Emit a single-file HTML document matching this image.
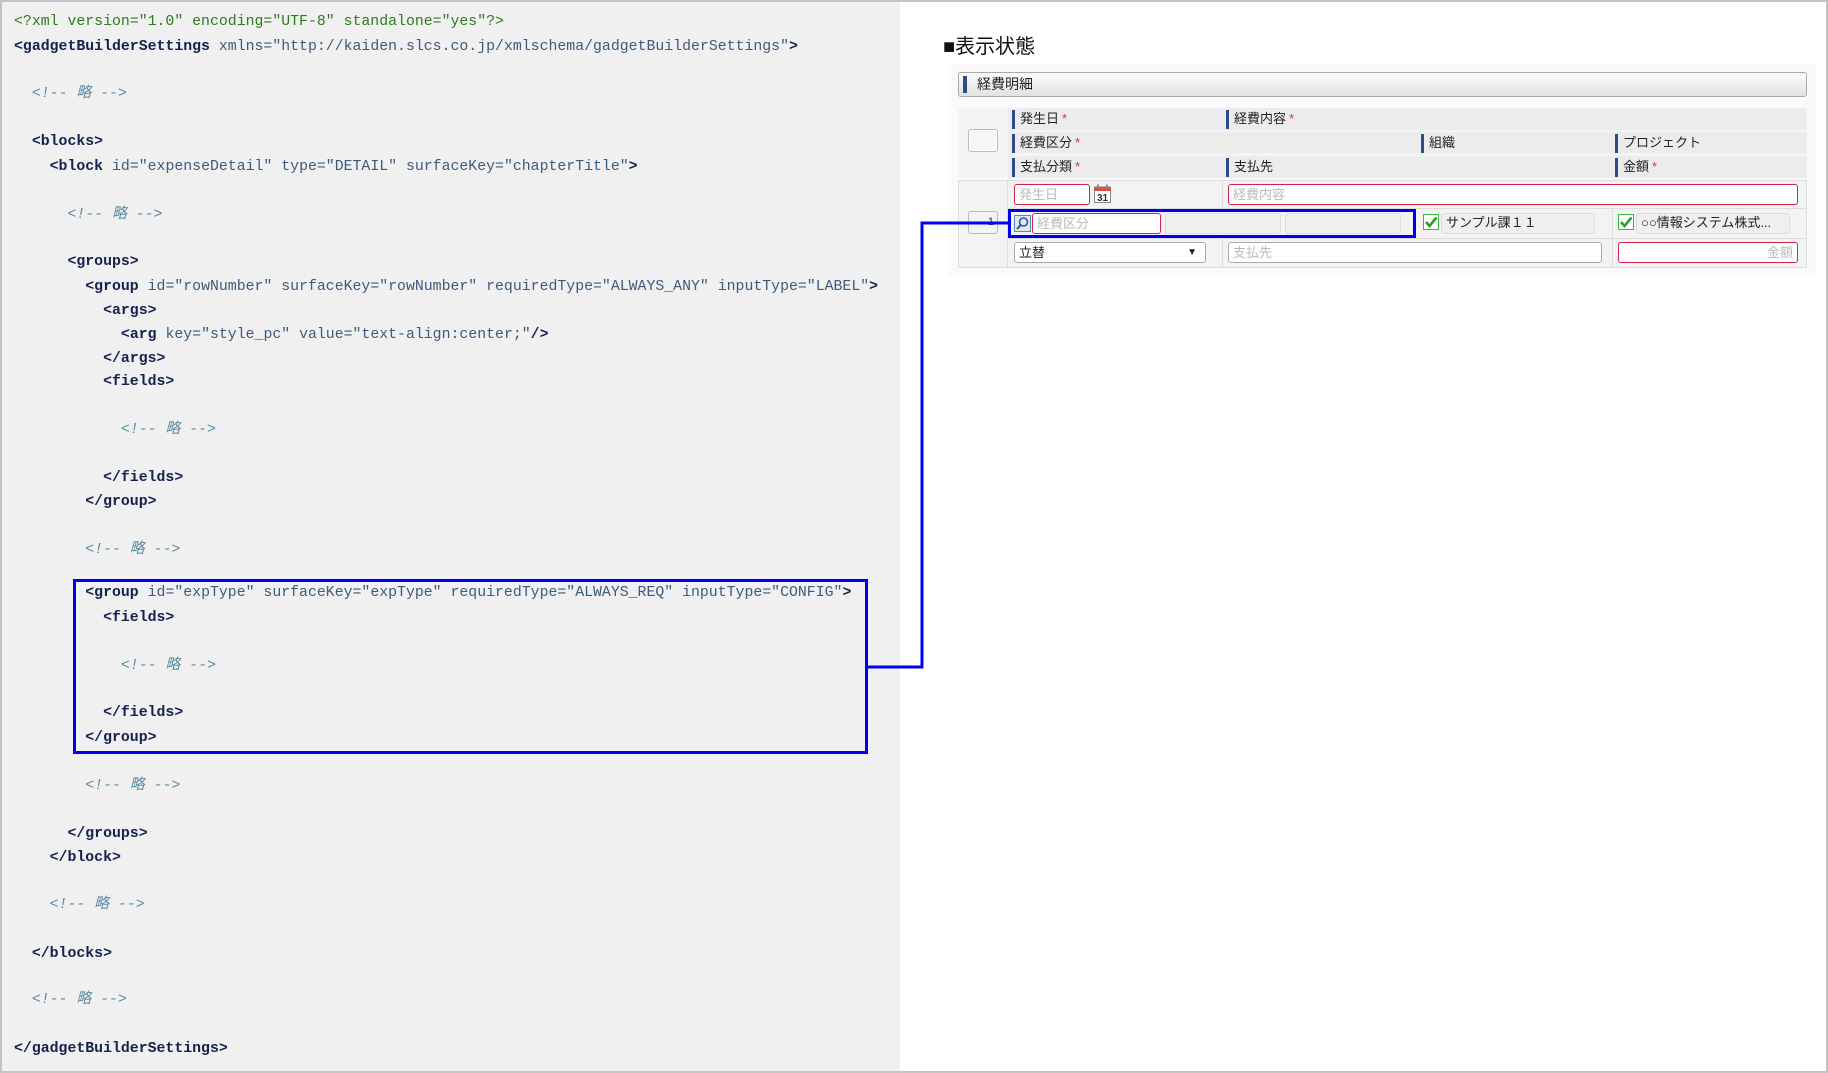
<!DOCTYPE html>
<html><head><meta charset="utf-8"><style>
html,body{margin:0;padding:0;}
body{width:1828px;height:1073px;position:relative;overflow:hidden;background:#fff;font-family:"Liberation Sans","Noto Sans CJK JP",sans-serif;}
#frame{position:absolute;left:0;top:0;width:1824px;height:1069px;border:2px solid #c4c4c4;}
#code{position:absolute;left:2px;top:2px;width:898px;height:1069px;background:#f0f0f0;}
.l{position:absolute;left:12px;height:24px;line-height:24px;font-family:"Liberation Mono","Noto Sans CJK JP",monospace;font-size:14.85px;white-space:pre;color:#3d5a7c;}
.t{color:#14224d;font-weight:bold;}
.c{color:#5a8aa2;font-style:italic;}
.g{color:#2f7a1e;}
.abs{position:absolute;box-sizing:border-box;}
.hdr{background:#ececec;}
.bar{position:absolute;width:3px;background:#2f4b8a;}
.ht{position:absolute;font-size:13px;color:#222;line-height:22px;}
.ht b{color:#e0303a;font-weight:normal;margin-left:3px;}
.inp{position:absolute;box-sizing:border-box;border:1px solid #d8204a;border-radius:3px;background:#fff;font-size:13px;color:#bbb;line-height:19px;padding-left:4px;}
.gbox{position:absolute;box-sizing:border-box;border:1px solid #ddd;border-radius:3px;background:#efefef;font-size:13px;color:#222;line-height:18px;padding-left:4px;}
.chk{position:absolute;box-sizing:border-box;width:16px;height:16px;border:1px solid #3cb83c;background:#fff;}
</style></head><body>
<div id="code">
<div class="l g" style="top:8px">&lt;?xml version="1.0" encoding="UTF-8" standalone="yes"?&gt;</div>
<div class="l" style="top:33px"><span class="t">&lt;gadgetBuilderSettings</span> xmlns="http://kaiden.slcs.co.jp/xmlschema/gadgetBuilderSettings"<span class="t">&gt;</span></div>
<div class="l c" style="top:80px">  &lt;!-- 略 --&gt;</div>
<div class="l t" style="top:128px">  &lt;blocks&gt;</div>
<div class="l" style="top:153px">    <span class="t">&lt;block</span> id="expenseDetail" type="DETAIL" surfaceKey="chapterTitle"<span class="t">&gt;</span></div>
<div class="l c" style="top:201px">      &lt;!-- 略 --&gt;</div>
<div class="l t" style="top:248px">      &lt;groups&gt;</div>
<div class="l" style="top:273px">        <span class="t">&lt;group</span> id="rowNumber" surfaceKey="rowNumber" requiredType="ALWAYS_ANY" inputType="LABEL"<span class="t">&gt;</span></div>
<div class="l t" style="top:297px">          &lt;args&gt;</div>
<div class="l" style="top:321px">            <span class="t">&lt;arg</span> key="style_pc" value="text-align:center;"<span class="t">/&gt;</span></div>
<div class="l t" style="top:345px">          &lt;/args&gt;</div>
<div class="l t" style="top:368px">          &lt;fields&gt;</div>
<div class="l c" style="top:416px">            &lt;!-- 略 --&gt;</div>
<div class="l t" style="top:464px">          &lt;/fields&gt;</div>
<div class="l t" style="top:488px">        &lt;/group&gt;</div>
<div class="l c" style="top:536px">        &lt;!-- 略 --&gt;</div>
<div class="l" style="top:579px">        <span class="t">&lt;group</span> id="expType" surfaceKey="expType" requiredType="ALWAYS_REQ" inputType="CONFIG"<span class="t">&gt;</span></div>
<div class="l t" style="top:604px">          &lt;fields&gt;</div>
<div class="l c" style="top:652px">            &lt;!-- 略 --&gt;</div>
<div class="l t" style="top:699px">          &lt;/fields&gt;</div>
<div class="l t" style="top:724px">        &lt;/group&gt;</div>
<div class="l c" style="top:772px">        &lt;!-- 略 --&gt;</div>
<div class="l t" style="top:820px">      &lt;/groups&gt;</div>
<div class="l t" style="top:844px">    &lt;/block&gt;</div>
<div class="l c" style="top:891px">    &lt;!-- 略 --&gt;</div>
<div class="l t" style="top:940px">  &lt;/blocks&gt;</div>
<div class="l c" style="top:986px">  &lt;!-- 略 --&gt;</div>
<div class="l t" style="top:1035px">&lt;/gadgetBuilderSettings&gt;</div>
</div>
<div id="frame"></div>

<div class="abs" style="left:943px;top:33px;font-size:20px;color:#111;line-height:28px;">■表示状態</div>
<div class="abs" style="left:948px;top:64px;width:868px;height:212px;background:#fafafc;"></div>
<div class="abs" style="left:958px;top:72px;width:849px;height:25px;border:1px solid #aaa;border-radius:3px;background:linear-gradient(#fbfbfb,#e2e2e2);"></div>
<div class="abs" style="left:963px;top:76px;width:4px;height:17px;background:#2f4b8a;"></div>
<div class="abs" style="left:977px;top:74px;font-size:14px;color:#222;line-height:21px;">経費明細</div>

<div class="abs hdr" style="left:958px;top:108px;width:849px;height:70px;background:#f4f4f4;"></div>
<div class="abs hdr" style="left:1008px;top:108px;width:799px;height:22px;"></div>
<div class="abs hdr" style="left:1008px;top:132px;width:799px;height:21px;"></div>
<div class="abs hdr" style="left:1008px;top:156px;width:799px;height:22px;"></div>
<div class="abs" style="left:968px;top:129px;width:30px;height:23px;border:1px solid #bbb;border-radius:3px;background:#f6f6f6;box-shadow:inset 0 0 0 1px #fff;"></div>
<div class="bar" style="left:1012px;top:110px;height:19px"></div>
<div class="bar" style="left:1226px;top:110px;height:19px"></div>
<div class="bar" style="left:1012px;top:134px;height:19px"></div>
<div class="bar" style="left:1421px;top:134px;height:19px"></div>
<div class="bar" style="left:1615px;top:134px;height:19px"></div>
<div class="bar" style="left:1012px;top:158px;height:19px"></div>
<div class="bar" style="left:1226px;top:158px;height:19px"></div>
<div class="bar" style="left:1615px;top:158px;height:19px"></div>
<div class="ht" style="left:1020px;top:108px">発生日<b>*</b></div>
<div class="ht" style="left:1234px;top:108px">経費内容<b>*</b></div>
<div class="ht" style="left:1020px;top:132px">経費区分<b>*</b></div>
<div class="ht" style="left:1429px;top:132px">組織</div>
<div class="ht" style="left:1623px;top:132px">プロジェクト</div>
<div class="ht" style="left:1020px;top:156px">支払分類<b>*</b></div>
<div class="ht" style="left:1234px;top:156px">支払先</div>
<div class="ht" style="left:1623px;top:156px">金額<b>*</b></div>

<div class="abs" style="left:958px;top:180px;width:849px;height:88px;background:#f3f3f3;border:1px solid #ddd;"></div>
<div class="abs" style="left:1007px;top:180px;width:1px;height:88px;background:#ddd;"></div>
<div class="abs" style="left:1008px;top:208px;width:799px;height:1px;background:#ddd;"></div>
<div class="abs" style="left:1008px;top:238px;width:799px;height:1px;background:#ddd;"></div>
<div class="abs" style="left:1222px;top:180px;width:1px;height:28px;background:#ddd;"></div>
<div class="abs" style="left:1222px;top:238px;width:1px;height:30px;background:#ddd;"></div>
<div class="abs" style="left:1612px;top:208px;width:1px;height:60px;background:#ddd;"></div>
<div class="abs" style="left:968px;top:211px;width:30px;height:23px;border:1px solid #bbb;border-radius:3px;background:#f3f3f3;font-size:11px;color:#333;text-align:right;padding-right:3px;line-height:20px;">1</div>

<div class="inp" style="left:1014px;top:184px;width:76px;height:21px;">発生日</div>
<svg class="abs" style="left:1094px;top:184px" width="17" height="19" viewBox="0 0 17 19"><rect x="0.5" y="3" width="16" height="15.5" fill="#fff" stroke="#888"/><rect x="0.5" y="3" width="16" height="4" fill="#e24a3a"/><rect x="3" y="0.5" width="2" height="4" fill="#888"/><rect x="12" y="0.5" width="2" height="4" fill="#888"/><text x="8.5" y="17" font-size="10" font-family="Liberation Sans" text-anchor="middle" fill="#333" font-weight="bold">31</text></svg>
<div class="inp" style="left:1228px;top:184px;width:570px;height:21px;">経費内容</div>

<svg class="abs" style="left:1014px;top:215px" width="17" height="17" viewBox="0 0 17 17"><rect x="0.5" y="0.5" width="16" height="16" fill="#dce8f5" stroke="#5a86b8"/><circle cx="9.5" cy="7" r="4" fill="none" stroke="#2d5a90" stroke-width="1.6"/><path d="M6.8 9.8 L3 14" stroke="#2d5a90" stroke-width="2"/></svg>
<div class="inp" style="left:1032px;top:213px;width:129px;height:21px;">経費区分</div>
<div class="gbox" style="left:1165px;top:213px;width:116px;height:21px;"></div>
<div class="gbox" style="left:1285px;top:213px;width:116px;height:21px;"></div>
<div class="chk" style="left:1423px;top:214px;"></div>
<svg class="abs" style="left:1424px;top:215px" width="14" height="14" viewBox="0 0 14 14"><path d="M2 7 L5.5 11 L12.5 2.5" stroke="#2aa02a" stroke-width="2.6" fill="none"/></svg>
<div class="gbox" style="left:1441px;top:213px;width:154px;height:21px;">サンプル課１１</div>
<div class="chk" style="left:1618px;top:214px;"></div>
<svg class="abs" style="left:1619px;top:215px" width="14" height="14" viewBox="0 0 14 14"><path d="M2 7 L5.5 11 L12.5 2.5" stroke="#2aa02a" stroke-width="2.6" fill="none"/></svg>
<div class="gbox" style="left:1636px;top:213px;width:154px;height:21px;">○○情報システム株式...</div>

<div class="abs" style="left:1014px;top:242px;width:192px;height:21px;border:1px solid #aaa;border-radius:3px;background:#fff;font-size:13px;color:#222;line-height:19px;padding-left:4px;">立替<span style="position:absolute;right:8px;top:0;font-size:10px;">▼</span></div>
<div class="abs" style="left:1228px;top:242px;width:374px;height:21px;border:1px solid #aaa;border-radius:3px;background:#fff;font-size:13px;color:#bbb;line-height:19px;padding-left:4px;">支払先</div>
<div class="inp" style="left:1618px;top:242px;width:180px;height:21px;text-align:right;padding-right:4px;">金額</div>

<div class="abs" style="left:73px;top:579px;width:795px;height:175px;border:3px solid #0000f0;"></div>
<div class="abs" style="left:1008px;top:209px;width:408px;height:29px;border:3px solid #0000f0;"></div>
<svg class="abs" style="left:0;top:0" width="1828" height="1073"><polyline points="867,667 922,667 922,223 1009,223" fill="none" stroke="#0000f0" stroke-width="3"/></svg>
</body></html>
